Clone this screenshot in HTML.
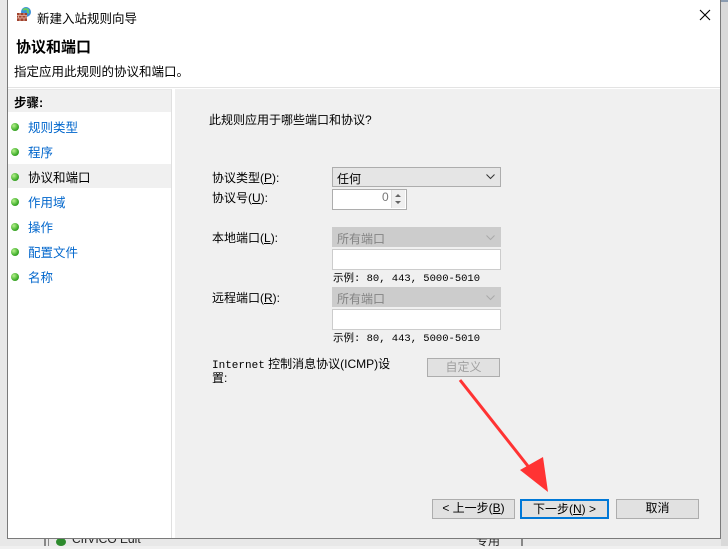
<!DOCTYPE html>
<html><head><meta charset="utf-8"><style>
*{margin:0;padding:0;box-sizing:border-box}
body{width:728px;height:546px;overflow:hidden;background:#f0f0f0;font-family:"Liberation Sans","Noto Sans CJK SC","WenQuanYi Zen Hei",sans-serif;font-size:12px;color:#000;position:relative}
.a{position:absolute}
.win{left:7px;top:0;width:714px;height:539px;background:#fff;border:1px solid #7a7a7a;border-top:none}
.dd{background:#e5e5e5;border:1px solid #adadad}
.dis{background:#cccccc;border:1px solid #cccccc;color:#838383}
.tb{background:#fff;border:1px solid #cccccc}
.btn{background:#e1e1e1;border:1px solid #adadad;text-align:center;line-height:17px;font-size:12px}
.step{left:28px;color:#0066cc;font-size:12.5px}
.dot{left:11px;width:8px;height:8px;border-radius:50%;background:radial-gradient(circle at 35% 35%,#b6f08c,#3fae2a 60%,#2a7a1c)}
.ex{left:333px;font-family:'Liberation Mono','Noto Sans CJK SC',monospace;font-size:10.5px}
</style></head><body>
<div class="a" style="left:0;top:0;width:728px;height:546px;background:#e8e8e8"></div>
<div class="a" style="left:721px;top:0;width:7px;height:546px;background:#d9d9d9"></div>
<div class="a" style="left:600px;top:0;width:128px;height:2px;background:#8a9bb0"></div>
<div class="a" style="left:44px;top:539px;width:2px;height:7px;background:#888"></div>
<div class="a" style="left:48px;top:539px;width:1px;height:7px;background:#888"></div>
<div class="a" style="left:56px;top:538px;width:10px;height:8px;border-radius:50%;background:#2d8a2d"></div>
<div class="a" style="left:72px;top:532px;font-size:12px;color:#222">CIIVICO Edit</div>
<div class="a" style="left:476px;top:532px;font-size:12px;color:#222">专用</div>
<div class="a" style="left:521px;top:539px;width:2px;height:7px;background:#888"></div>
<div class="a win"></div>
<svg class="a" style="left:16px;top:6px" width="16" height="16" viewBox="0 0 16 16">
<circle cx="10" cy="6" r="5" fill="#3a8fd9"/><path d="M7 4q3-2 5 0q-1 2 1 3" stroke="#6c6" stroke-width="2" fill="none"/>
<rect x="1" y="7" width="10" height="8" fill="#a0432e"/>
<path d="M1 9.5h10M1 12h10M4 7v2.5M8 7v2.5M2.5 9.5v2.5M6 9.5v2.5M10 9.5v2.5M4 12v3M8 12v3" stroke="#e8b9a8" stroke-width="0.8"/>
</svg>
<div class="a" style="left:37px;top:8px;font-size:12.5px">新建入站规则向导</div>
<svg class="a" style="left:699px;top:9px" width="12" height="12"><path d="M1 1L11 11M11 1L1 11" stroke="#000" stroke-width="1.1"/></svg>
<div class="a" style="left:16px;top:36px;font-size:15px;font-weight:bold">协议和端口</div>
<div class="a" style="left:14px;top:61px;font-size:12.5px">指定应用此规则的协议和端口。</div>
<div class="a" style="left:8px;top:87px;width:712px;height:1px;background:#e3e3e3"></div>
<div class="a" style="left:8px;top:89px;width:164px;height:449px;background:#fff;border-right:1px solid #e0e0e0;border-top:1px solid #e8e8e8"></div>
<div class="a" style="left:8px;top:90px;width:163px;height:22px;background:#f0f0f0"></div>
<div class="a" style="left:14px;top:92px;font-weight:bold;font-size:12.5px">步骤:</div>
<div class="a" style="left:8px;top:164px;width:163px;height:24px;background:#f0f0f0"></div>
<div class="a dot" style="top:123px"></div><div class="a step" style="top:117px">规则类型</div>
<div class="a dot" style="top:148px"></div><div class="a step" style="top:142px">程序</div>
<div class="a dot" style="top:173px"></div><div class="a step" style="top:167px;color:#000">协议和端口</div>
<div class="a dot" style="top:198px"></div><div class="a step" style="top:192px">作用域</div>
<div class="a dot" style="top:223px"></div><div class="a step" style="top:217px">操作</div>
<div class="a dot" style="top:248px"></div><div class="a step" style="top:242px">配置文件</div>
<div class="a dot" style="top:273px"></div><div class="a step" style="top:267px">名称</div>
<div class="a" style="left:175px;top:89px;width:545px;height:449px;background:#f0f0f0"></div>
<div class="a" style="left:209px;top:111px">此规则应用于哪些端口和协议?</div>
<div class="a" style="left:212px;top:169px">协议类型(<u>P</u>):</div>
<div class="a dd" style="left:332px;top:167px;width:169px;height:20px"></div>
<div class="a" style="left:337px;top:170px">任何</div>
<svg class="a" style="left:486px;top:174px" width="9" height="6"><path d="M0.5 0.5L4.5 4.5L8.5 0.5" stroke="#333" fill="none"/></svg>
<div class="a" style="left:212px;top:189px">协议号(<u>U</u>):</div>
<div class="a tb" style="left:332px;top:189px;width:75px;height:21px;border-color:#adadad"></div>
<div class="a" style="left:382px;top:190px;color:#777">0</div>
<div class="a" style="left:391px;top:190px;width:14px;height:18px;background:#f0f0f0;border-left:1px solid #ddd"></div>
<svg class="a" style="left:394px;top:192px" width="8" height="14"><path d="M1 5L4 2L7 5ZM1 9L4 12L7 9Z" fill="#666"/></svg>
<div class="a" style="left:212px;top:229px">本地端口(<u>L</u>):</div>
<div class="a dis" style="left:332px;top:227px;width:169px;height:20px"></div>
<div class="a" style="left:337px;top:230px;color:#838383">所有端口</div>
<svg class="a" style="left:486px;top:235px" width="9" height="6"><path d="M0.5 0.5L4.5 4.5L8.5 0.5" stroke="#aaa" fill="none"/></svg>
<div class="a tb" style="left:332px;top:249px;width:169px;height:21px"></div>
<div class="a ex" style="top:270px">示例: 80, 443, 5000-5010</div>
<div class="a" style="left:212px;top:289px">远程端口(<u>R</u>):</div>
<div class="a dis" style="left:332px;top:287px;width:169px;height:20px"></div>
<div class="a" style="left:337px;top:290px;color:#838383">所有端口</div>
<svg class="a" style="left:486px;top:295px" width="9" height="6"><path d="M0.5 0.5L4.5 4.5L8.5 0.5" stroke="#aaa" fill="none"/></svg>
<div class="a tb" style="left:332px;top:309px;width:169px;height:21px"></div>
<div class="a ex" style="top:330px">示例: 80, 443, 5000-5010</div>
<div class="a" style="left:212px;top:358px;line-height:12px;width:200px"><span style="font-family:'Liberation Mono',monospace;font-size:11px">Internet</span> 控制消息协议(ICMP)设<br>置:</div>
<div class="a btn dis" style="left:427px;top:358px;width:73px;height:19px;color:#a0a0a0;line-height:17px">自定义</div>
<div class="a btn" style="left:432px;top:499px;width:83px;height:20px">&lt; 上一步(<u>B</u>)</div>
<div class="a btn" style="left:520px;top:499px;width:89px;height:20px;border:2px solid #0078d7;line-height:16px">下一步(<u>N</u>) &gt;</div>
<div class="a btn" style="left:616px;top:499px;width:83px;height:20px">取消</div>
<svg class="a" style="left:455px;top:375px" width="100" height="120"><path d="M5 5L80 100" stroke="#f33" stroke-width="3"/><path d="M93 117L65 95L88 82Z" fill="#f33"/></svg>
</body></html>
